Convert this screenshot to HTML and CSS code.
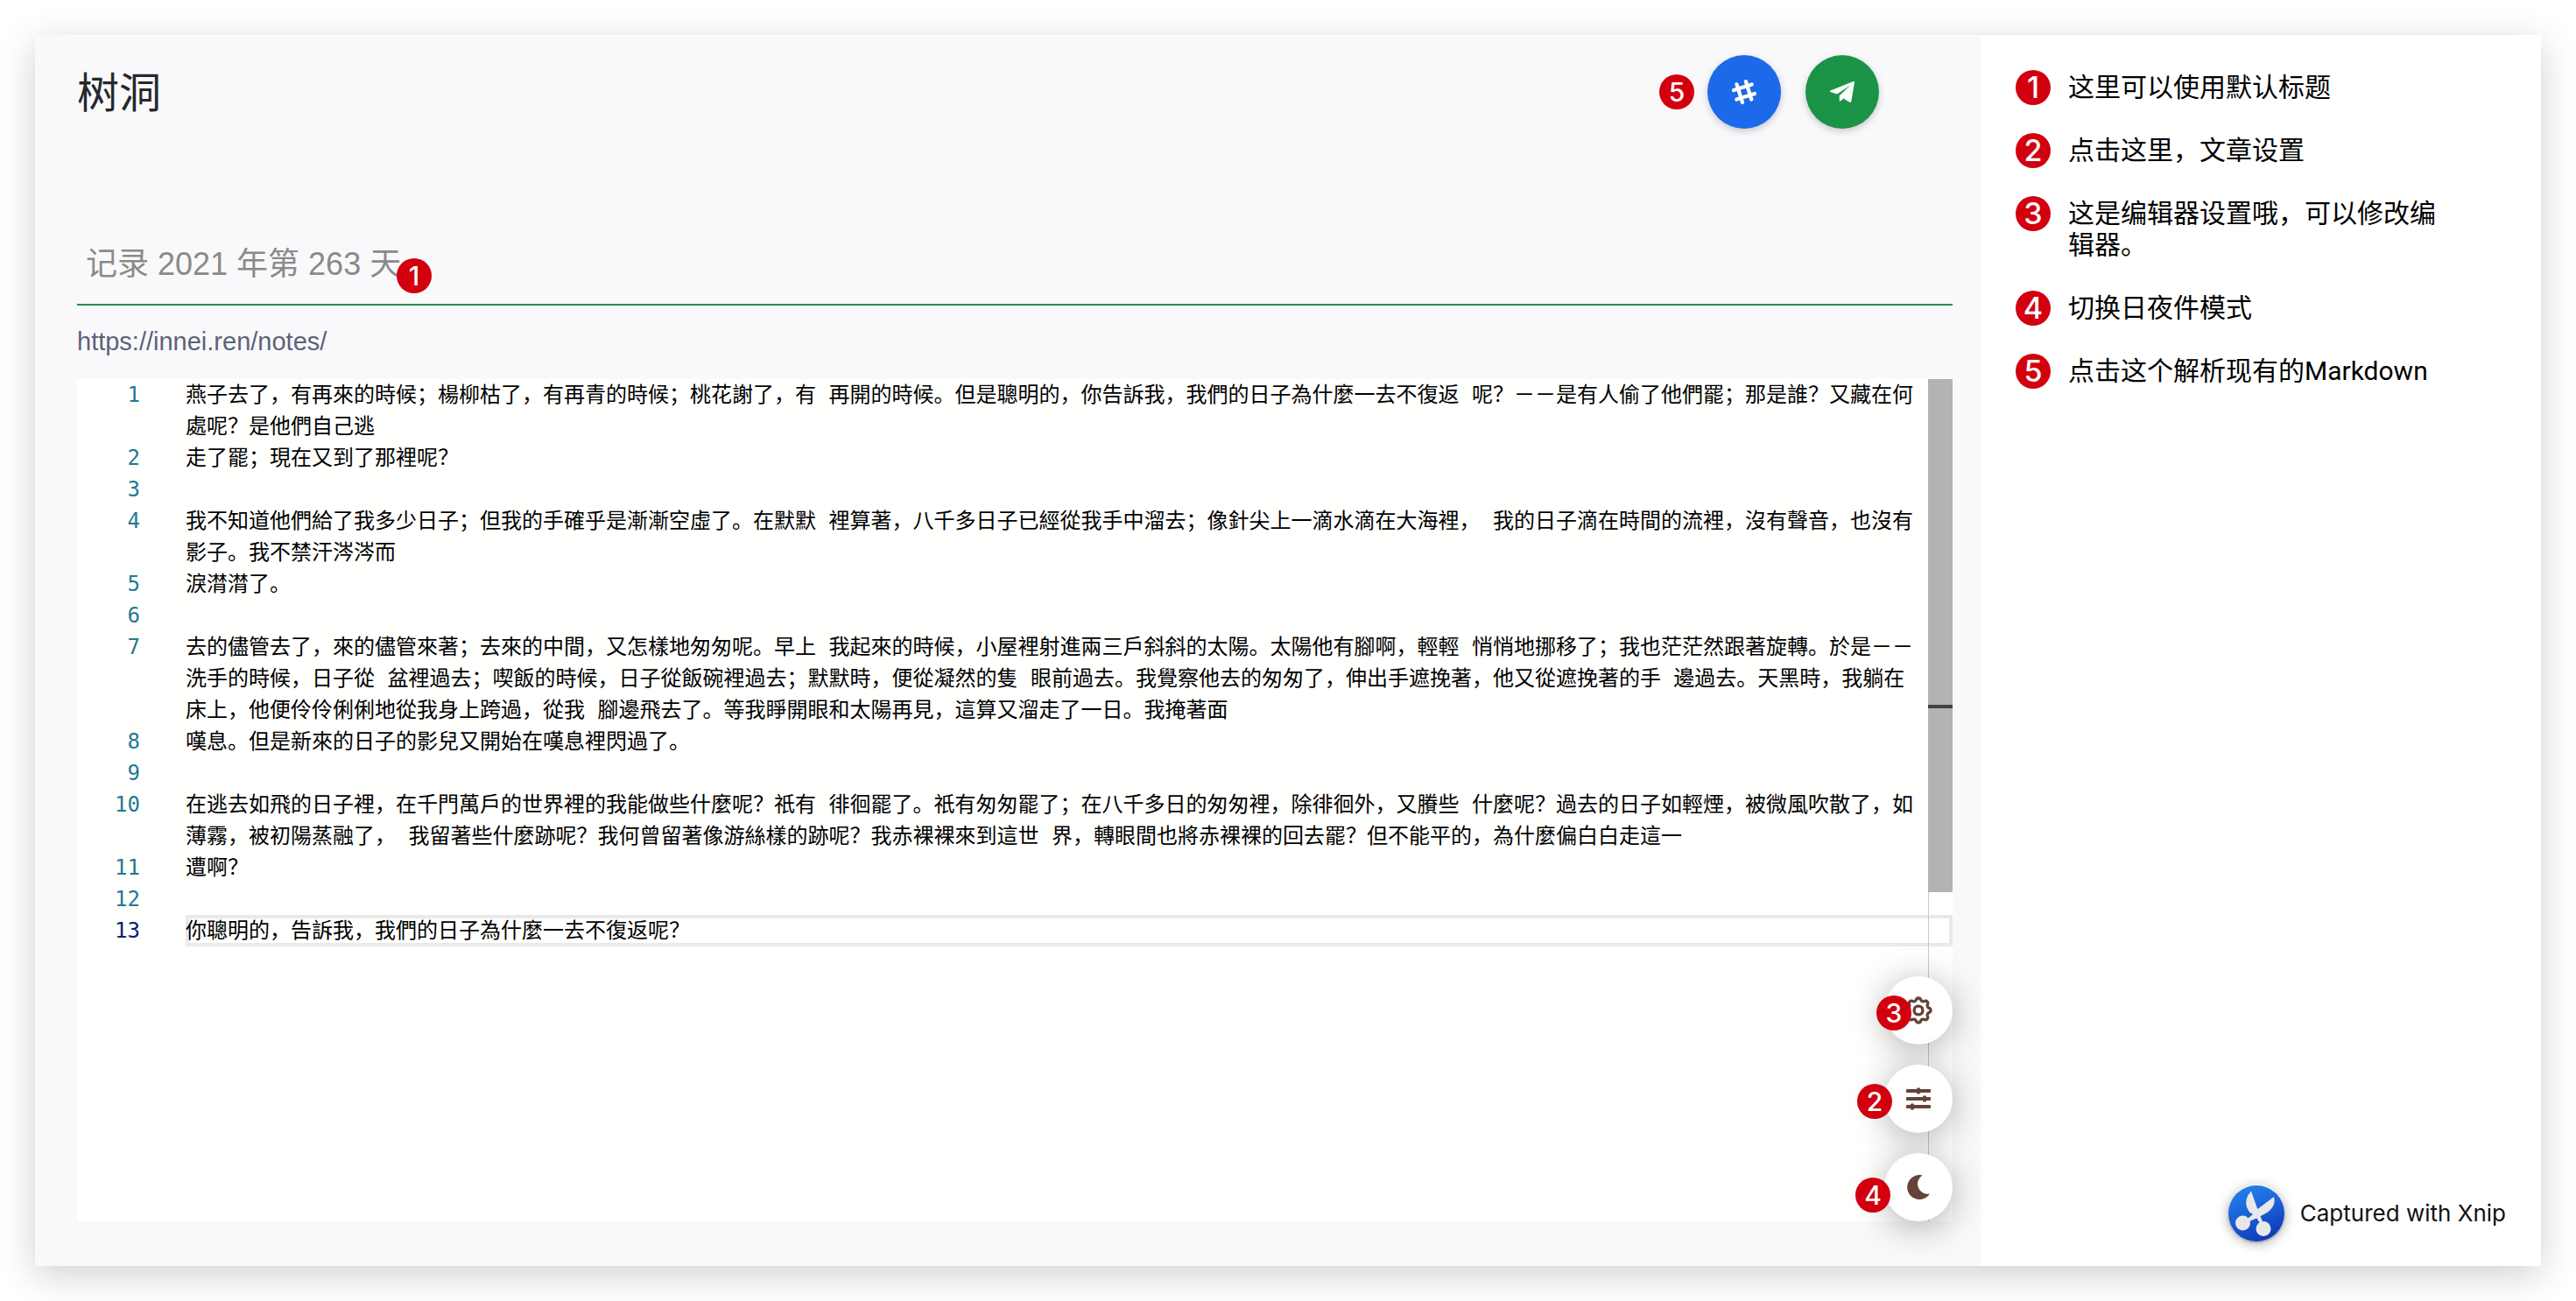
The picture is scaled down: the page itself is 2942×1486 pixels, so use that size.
FILE: index.html
```html
<!DOCTYPE html>
<html lang="zh-CN">
<head>
<meta charset="utf-8">
<meta name="viewport" content="width=device-width, initial-scale=1">
<title>树洞</title>
<link rel="stylesheet" href="styles.css">
</head>
<body>
<div class="window">
  <main class="main">
    <header class="header">
      <h1 class="title">树洞</h1>
      <div class="actions">
        <span class="badge">5</span>
        <button class="action action-parse" type="button" aria-label="解析 Markdown">
          <svg width="28" height="28" viewBox="-14 -14 28 28" fill="none" stroke="#fff" stroke-width="4.2" stroke-linecap="round"><path d="M1.9-12 8.3 8.5M-8.5-8.7-2 12M-12-1.9 8.7-8.5M-8.7 8.5 12 2"/></svg>
        </button>
        <button class="action action-send" type="button" aria-label="发布">
          <svg width="28" height="28" viewBox="-14 -14 28 28" fill="#fff"><path d="M-13.6-1.4 12.8-12Q14.3-12.4 14-10.9L10.3 10.8Q9.9 12.5 8.4 11.8L1.4 7.4-2 10.3Q-3.3 11-3.3 9.800V4.2L9.500-7.8-6 2.600-13.5.1Q-14.8-.7-13.6-1.4Z"/></svg>
        </button>
      </div>
    </header>

    <div class="field">
      <input class="field-input" type="text" aria-label="标题" placeholder="记录 2021 年第 263 天">
      <span class="badge badge-field">1</span>
    </div>
    <a class="permalink" href="#notes">https://innei.ren/notes/</a>

    <section class="editor" aria-label="编辑器">
      <ol class="lines">
        <li class="line"><span class="num">1</span><span class="text">燕子去了，有再來的時候；楊柳枯了，有再青的時候；桃花謝了，有 再開的時候。但是聰明的，你告訴我，我們的日子為什麼一去不復返 呢？－－是有人偷了他們罷；那是誰？又藏在何處呢？是他們自己逃</span></li>
        <li class="line"><span class="num">2</span><span class="text">走了罷；現在又到了那裡呢？</span></li>
        <li class="line"><span class="num">3</span><span class="text"></span></li>
        <li class="line"><span class="num">4</span><span class="text">我不知道他們給了我多少日子；但我的手確乎是漸漸空虛了。在默默 裡算著，八千多日子已經從我手中溜去；像針尖上一滴水滴在大海裡， 我的日子滴在時間的流裡，沒有聲音，也沒有影子。我不禁汗涔涔而</span></li>
        <li class="line"><span class="num">5</span><span class="text">淚潸潸了。</span></li>
        <li class="line"><span class="num">6</span><span class="text"></span></li>
        <li class="line"><span class="num">7</span><span class="text">去的儘管去了，來的儘管來著；去來的中間，又怎樣地匆匆呢。早上 我起來的時候，小屋裡射進兩三戶斜斜的太陽。太陽他有腳啊，輕輕 悄悄地挪移了；我也茫茫然跟著旋轉。於是－－洗手的時候，日子從 盆裡過去；喫飯的時候，日子從飯碗裡過去；默默時，便從凝然的隻 眼前過去。我覺察他去的匆匆了，伸出手遮挽著，他又從遮挽著的手 邊過去。天黑時，我躺在床上，他便伶伶俐俐地從我身上跨過，從我 腳邊飛去了。等我睜開眼和太陽再見，這算又溜走了一日。我掩著面</span></li>
        <li class="line"><span class="num">8</span><span class="text">嘆息。但是新來的日子的影兒又開始在嘆息裡閃過了。</span></li>
        <li class="line"><span class="num">9</span><span class="text"></span></li>
        <li class="line"><span class="num">10</span><span class="text">在逃去如飛的日子裡，在千門萬戶的世界裡的我能做些什麼呢？祇有 徘徊罷了。祇有匆匆罷了；在八千多日的匆匆裡，除徘徊外，又賸些 什麼呢？過去的日子如輕煙，被微風吹散了，如薄霧，被初陽蒸融了， 我留著些什麼跡呢？我何曾留著像游絲樣的跡呢？我赤裸裸來到這世 界，轉眼間也將赤裸裸的回去罷？但不能平的，為什麼偏白白走這一</span></li>
        <li class="line"><span class="num">11</span><span class="text">遭啊？</span></li>
        <li class="line"><span class="num">12</span><span class="text"></span></li>
        <li class="line line-current"><span class="num">13</span><span class="text">你聰明的，告訴我，我們的日子為什麼一去不復返呢？</span></li>
      </ol>
      <div class="ruler"><div class="thumb"></div></div>
      <div class="tools">
        <div class="tool-row">
          <button class="tool" type="button" aria-label="编辑器设置">
            <svg width="32" height="32" viewBox="-16 -16 32 32" fill="none" stroke="#64433a" stroke-width="3.4"><circle r="4.9"/><path d="M12.6-2.4A2.7 2.7 0 0 1 12.6 2.4A3.2 3.2 0 0 0 10.6 7.2A2.7 2.7 0 0 1 7.2 10.6A3.2 3.2 0 0 0 2.4 12.6A2.7 2.7 0 0 1-2.4 12.6A3.2 3.2 0 0 0-7.2 10.6A2.7 2.7 0 0 1-10.6 7.2A3.2 3.2 0 0 0-12.6 2.4A2.7 2.7 0 0 1-12.6-2.4A3.2 3.2 0 0 0-10.6-7.2A2.7 2.7 0 0 1-7.2-10.6A3.2 3.2 0 0 0-2.4-12.6A2.7 2.7 0 0 1 2.4-12.6A3.2 3.2 0 0 0 7.2-10.6A2.7 2.7 0 0 1 10.6-7.2A3.2 3.2 0 0 0 12.6-2.4Z"/></svg>
          </button>
          <span class="badge badge-gear">3</span>
        </div>
        <div class="tool-row">
          <button class="tool" type="button" aria-label="文章设置">
            <svg width="28" height="28" viewBox="-14 -14 28 28" fill="#64433a"><rect x="-14" y="-11" width="28" height="4" rx="1"/><rect x="-14" y="-2" width="28" height="4" rx="1"/><rect x="-14" y="7" width="28" height="4" rx="1"/><rect x="-2" y="-12.5" width="4" height="7" rx="1"/><rect x="5" y="-3.5" width="4" height="7" rx="1"/><rect x="-9" y="5.5" width="4" height="7" rx="1"/></svg>
          </button>
          <span class="badge badge-sliders">2</span>
        </div>
        <div class="tool-row">
          <button class="tool" type="button" aria-label="切换日夜间模式">
            <svg width="28" height="28" viewBox="-14 -14 28 28" fill="#64433a"><path d="M4.5-13.6A14 14 0 1 0 13 7.6A11.6 11.6 0 0 1 4.5-13.6Z"/></svg>
          </button>
          <span class="badge badge-moon">4</span>
        </div>
      </div>
    </section>
  </main>

  <aside class="notes">
    <ol class="note-list">
      <li class="note"><span class="badge">1</span><span class="note-text">这里可以使用默认标题</span></li>
      <li class="note"><span class="badge">2</span><span class="note-text">点击这里，文章设置</span></li>
      <li class="note"><span class="badge">3</span><span class="note-text">这是编辑器设置哦，可以修改编辑器。</span></li>
      <li class="note"><span class="badge">4</span><span class="note-text">切换日夜件模式</span></li>
      <li class="note"><span class="badge">5</span><span class="note-text">点击这个解析现有的Markdown</span></li>
    </ol>
    <footer class="credit">
      <svg class="logo" width="72" height="72" viewBox="-36 -36 72 72" aria-hidden="true">
        <defs>
          <linearGradient id="disc" x1=".3" y1="0" x2=".7" y2="1"><stop offset="0" stop-color="#2482f0"/><stop offset="1" stop-color="#0f37b8"/></linearGradient>
          <linearGradient id="rim" x1="0" y1="0" x2="0" y2="1"><stop offset="0" stop-color="#f4f4f4"/><stop offset="1" stop-color="#b4b4b4"/></linearGradient>
        </defs>
        <circle r="34" fill="url(#rim)"/>
        <circle r="32" fill="url(#disc)"/>
        <g fill="#e8e8e8">
          <path d="M-6-25.5C-12-19-13-12-10.500-6L-8-1.500-2 2 4 11 7 9 4 2 1-6Z"/>
          <path d="M20-19C22-12 19-6 13-1.500L5 3-1 6-8 9-10 6-3 0 2-5.500Z"/>
          <circle cx="-15.5" cy="11" r="8.5"/>
          <circle cx="8" cy="17.5" r="8.5"/>
        </g>
      </svg>
      <span>Captured with Xnip</span>
    </footer>
  </aside>
</div>
</body>
</html>
```
FILE: styles.css
```css
* {
  box-sizing: border-box;
}

body {
  margin: 0;
  padding: 40px;
  background: #fff;
  color: #000;
  font-family: "Liberation Sans", "Noto Sans CJK SC", sans-serif;
  text-spacing-trim: space-all;
}

button {
  padding: 0;
  border: 0;
  cursor: pointer;
}

.window {
  display: flex;
  min-height: calc(100vh - 80px);
  box-shadow: 0 10px 40px rgba(0, 0, 0, 0.19);
}

.main {
  flex: 1;
  min-width: 0;
  display: flex;
  flex-direction: column;
  padding: 23px 32px 51px 48px;
  background: #f9f9fc;
}

.header {
  display: flex;
  align-items: center;
  justify-content: space-between;
  padding-right: 84px;
}

.title {
  margin: 0;
  padding-top: 4px;
  font-size: 48px;
  line-height: 72px;
  font-weight: 400;
  color: #26282c;
}

.actions {
  display: flex;
  align-items: center;
}

.action {
  display: grid;
  place-items: center;
  width: 84px;
  height: 84px;
  border-radius: 50%;
  box-shadow: 0 3px 8px rgba(0, 0, 0, 0.2);
}

.action-parse {
  margin: 0 28px 0 15px;
  background: #1c69ea;
}

.action-send {
  background: #1b9347;
}

.badge {
  flex: none;
  display: grid;
  place-items: center;
  width: 40px;
  height: 40px;
  border-radius: 50%;
  background: #d2000f;
  color: #fff;
  font-family: Inter, sans-serif;
  font-size: 30px;
  line-height: 40px;
  font-weight: 500;
}

.field {
  position: relative;
  margin-top: 106px;
}

.field-input {
  display: block;
  width: 100%;
  height: 96px;
  padding: 4px 10px 0;
  border: 0;
  border-bottom: 2px solid #1b9347;
  border-radius: 0;
  outline: 0;
  background: transparent;
  font: inherit;
  font-size: 36px;
}

.field-input::placeholder {
  color: #8a8a8a;
  opacity: 1;
}

.badge-field {
  position: absolute;
  left: 365px;
  bottom: 14px;
}

.permalink {
  align-self: flex-start;
  margin: 23px 0 25px;
  color: #5c6377;
  font-size: 29px;
  line-height: 36px;
  text-decoration: none;
}

.editor {
  position: relative;
  flex: 1;
  background: #fffffe;
}

.lines {
  margin: 0;
  padding: 0;
  list-style: none;
  font-family: "DejaVu Sans Mono", "Noto Sans CJK SC", monospace;
  font-size: 24px;
  line-height: 36px;
}

.line {
  display: flex;
}

.num {
  flex: none;
  width: 72px;
  margin-right: 52px;
  text-align: right;
  color: #237893;
}

.text {
  flex: 1;
  min-width: 0;
  min-height: 36px;
  padding-right: 38px;
  line-break: anywhere;
}

.line-current .num {
  color: #0b216f;
}

.line-current .text {
  box-shadow: inset 0 0 0 4px #e9e9e9;
}

.ruler {
  position: absolute;
  top: 0;
  right: 0;
  bottom: 0;
  width: 28px;
  border-left: 1px solid #c8c8c8;
}

.thumb {
  height: 586px;
  margin-left: -1px;
  background: linear-gradient(#424242, #424242) 0 372px / 100% 4px no-repeat #b3b3b3;
}

.tools {
  position: absolute;
  right: 0;
  bottom: 0;
  display: grid;
  gap: 23px;
}

.tool-row {
  position: relative;
}

.tool {
  display: grid;
  place-items: center;
  width: 78px;
  height: 78px;
  border-radius: 50%;
  background: #fff;
  box-shadow: 0 6px 40px rgba(0, 0, 0, 0.32);
}

.tool-row .badge {
  position: absolute;
  bottom: 16px;
}

.tool-row .badge-gear {
  right: 47px;
}

.tool-row .badge-sliders {
  right: 69px;
}

.tool-row .badge-moon {
  right: 71px;
  bottom: 10px;
}

.notes {
  flex: none;
  width: 640px;
  display: flex;
  flex-direction: column;
  justify-content: space-between;
  padding: 40px 40px 24px;
  background: #fff;
}

.note-list {
  display: grid;
  gap: 34px;
  margin: 0;
  padding: 0 60px 0 0;
  list-style: none;
  font-family: Roboto, "Noto Sans CJK SC", sans-serif;
  font-size: 30px;
  line-height: 36px;
}

.note {
  display: flex;
  align-items: flex-start;
  gap: 20px;
}

.note-text {
  padding-top: 2px;
}

.note .badge {
  margin-bottom: -4px;
  font-size: 34px;
}

.credit {
  display: flex;
  align-items: center;
  justify-content: flex-end;
  gap: 14px;
  font-family: Inter, sans-serif;
  font-size: 26px;
  line-height: 36px;
  color: #111;
}

.logo {
  border-radius: 50%;
  filter: drop-shadow(0 2px 6px rgba(0, 0, 0, 0.25));
}
```
